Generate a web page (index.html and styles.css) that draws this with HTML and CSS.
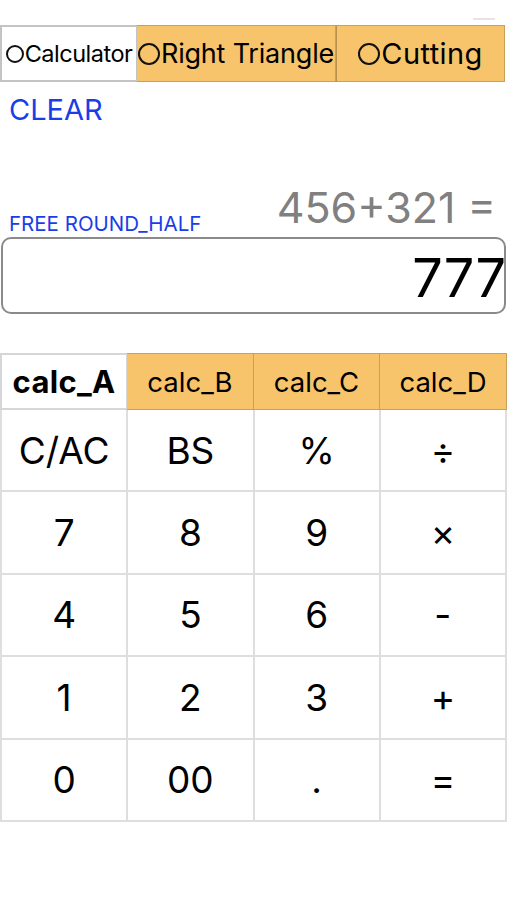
FILE: index.html
```html
<!DOCTYPE html>
<html>
<head>
<meta charset="utf-8">
<link rel="stylesheet" href="styles.css">
</head>
<body>
<div class="app">
  <div class="status"><span class="tick"></span></div>
  <div class="modes">
    <div class="mode mode-active mode-calc"><span class="ring"></span>Calculator</div>
    <div class="mode mode-tri"><span class="ring"></span>Right Triangle</div>
    <div class="mode mode-cut"><span class="ring"></span>Cutting</div>
  </div>
  <div class="clear">CLEAR</div>
  <div class="info">
    <div class="rounding">FREE ROUND_HALF</div>
    <div class="expr">456+321 =</div>
  </div>
  <div class="display"><span class="result">777</span></div>
  <div class="calc-tabs">
    <div class="ctab ctab-active">calc_A</div>
    <div class="ctab">calc_B</div>
    <div class="ctab">calc_C</div>
    <div class="ctab">calc_D</div>
  </div>
  <div class="keys">
    <div class="key">C/AC</div><div class="key">BS</div><div class="key">%</div><div class="key">÷</div>
    <div class="key">7</div><div class="key">8</div><div class="key">9</div><div class="key">×</div>
    <div class="key">4</div><div class="key">5</div><div class="key">6</div><div class="key">-</div>
    <div class="key">1</div><div class="key">2</div><div class="key">3</div><div class="key">+</div>
    <div class="key">0</div><div class="key">00</div><div class="key key-dot">.</div><div class="key">=</div>
  </div>
</div>
</body>
</html>
```
FILE: styles.css
```css
* { box-sizing: border-box; }
html, body { margin: 0; padding: 0; background: #fff; }
body { font-family: Inter, "Liberation Sans", sans-serif; color: #000; }
.app { width: 507px; }
.status { height: 25px; display: flex; justify-content: flex-end; }
.tick { width: 22px; height: 2px; background: #e4e4e4; margin-top: 18px; margin-right: 12px; }
.modes { display: flex; height: 57px; width: 505px; }
.mode {
  display: flex; align-items: center; justify-content: center;
  background: #f7c46c; border: 1px solid #c9a058; font-size: 28px; white-space: nowrap;
  letter-spacing: 0;
}
.mode-calc { width: 137px; background: #fff; border: 2px solid #c4c4c4; border-right: 1px solid #c4c4c4; font-size: 23.5px; letter-spacing: -0.5px; }
.mode-tri { width: 199px; border-left: 0; font-size: 27px; letter-spacing: -0.2px; }
.mode-cut { width: 169px; border-left: 1px solid #b89050; font-size: 29px; letter-spacing: 0.4px; }
.ring {
  display: inline-block; width: 22px; height: 22px; border: 2px solid #111; border-radius: 50%;
  margin-right: 1px; flex: none;
}
.mode-calc .ring { width: 18px; height: 18px; }
.clear { color: #1b3de8; font-size: 29px; padding: 10px 0 0 9px; height: 60px; }
.info { display: flex; justify-content: space-between; align-items: flex-end; padding: 0 11px 0 9px; height: 95px; }
.rounding { color: #1b3de8; font-size: 20.5px; padding-bottom: 1px; }
.expr { color: #808080; font-size: 43px; line-height: 1; padding-bottom: 8px; }
.display {
  margin: 0 1px; height: 77px; border: 2px solid #8a8a8a; border-radius: 10px;
  display: flex; justify-content: flex-end; align-items: center; overflow: hidden;
}
.result { font-size: 54px; line-height: 1; margin-right: -2px; margin-top: 4px; }
.calc-tabs { display: grid; grid-template-columns: 127px 127px 126px 127px; height: 57px; margin-top: 39px; }
.ctab {
  display: flex; align-items: center; justify-content: center;
  background: #f7c46c; border: 1px solid #c9a058; border-left: 0; font-size: 27.5px;
}
.ctab-active { background: #fff; border: 2px solid #d6d6d6; border-right: 1px solid #d6d6d6; font-weight: 700; font-size: 31px; letter-spacing: 0.3px; }
.keys {
  display: grid; grid-template-columns: repeat(4, 1fr); grid-auto-rows: 80.4px; gap: 2px;
  background: #dedede; padding: 0 2px 2px 2px;
}
.key { background: #fff; display: flex; align-items: center; justify-content: center; font-size: 37px; }
```
